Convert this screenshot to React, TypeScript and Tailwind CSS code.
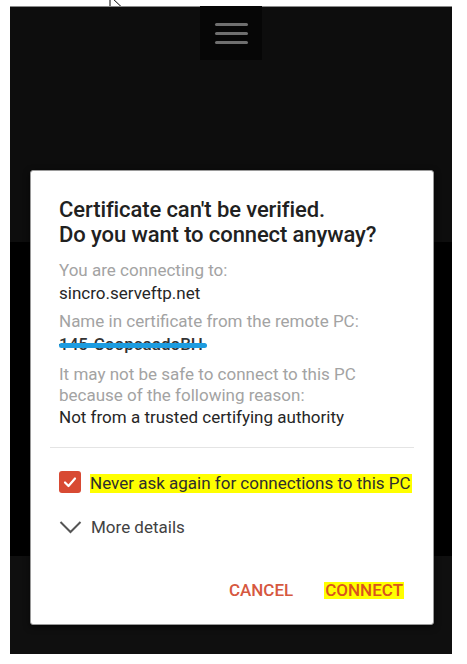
import React from 'react';

const Cursor: React.FC = () => (
  <svg className="absolute left-[109px] top-[-5px]" width="14" height="20" viewBox="0 0 14 20">
    <path d="M1 1 L1 16 L4.5 12.5 L7 18 L9.5 17 L7 11.5 L12 11.5 Z" fill="#fff" stroke="#000" strokeWidth="1" strokeLinejoin="round" />
  </svg>
);

const App: React.FC = () => {
  return (
    <div className="relative w-[467px] h-[664px] bg-white pt-[6px] pl-[10px] font-['Roboto',sans-serif] overflow-hidden">
      <Cursor />
      <div className="relative w-[442px] h-[648px] border-t border-[#8a8a8a] flex flex-col">
        <div className="h-[235px] bg-[#0d0d0d] flex justify-center">
          <button className="w-[62px] h-[54px] bg-[#060606] flex flex-col items-center justify-center gap-[6px] -mt-px">
            <span className="block w-[33px] h-[3px] rounded-full bg-[#6f6f6f]" />
            <span className="block w-[33px] h-[3px] rounded-full bg-[#6f6f6f]" />
            <span className="block w-[33px] h-[3px] rounded-full bg-[#6f6f6f]" />
          </button>
        </div>
        <div className="h-[314px] bg-black" />
        <div className="flex-1 bg-[#0f0f0f]" />

        <div className="absolute left-[20px] top-[163px] w-[404px] h-[455px] bg-white rounded-[3px] border border-[#9a9a9a] shadow-[0_2px_6px_rgba(0,0,0,0.6)] flex flex-col pt-[26px]">
          <div className="px-[28px]">
            <h2 className="text-[22px] leading-[25px] font-medium text-[#212121] tracking-[-0.1px]">
              Certificate can't be verified.
              <br />
              Do you want to connect anyway?
            </h2>
            <p className="mt-[12px] text-[17px] leading-[23px] text-[#a3a3a3]">You are connecting to:</p>
            <p className="text-[17px] leading-[23px] text-[#262626]">sincro.serveftp.net</p>
            <p className="mt-[5px] text-[17px] leading-[23px] text-[#a3a3a3]">Name in certificate from the remote PC:</p>
            <div className="relative inline-block">
              <p className="text-[17px] leading-[23px] text-[#333] font-medium line-through decoration-2">145-CoopcaadoBH</p>
              <span className="absolute left-0 right-[-4px] top-[10px] h-[5px] rounded-full bg-[#1d9ce0]" />
            </div>
            <p className="mt-[7px] text-[17px] leading-[21px] text-[#a3a3a3]">
              It may not be safe to connect to this PC
              <br />
              because of the following reason:
            </p>
            <p className="text-[17px] leading-[23px] text-[#262626]">Not from a trusted certifying authority</p>
          </div>

          <div className="mt-[18px] mx-[19px] h-px bg-[#e4e4e4]" />

          <div className="mt-[23px] pl-[28px] flex items-center gap-[9px] h-[22px]">
            <span className="w-[22px] h-[22px] rounded-[3px] bg-[#d84a33] flex items-center justify-center shrink-0">
              <svg width="16" height="16" viewBox="0 0 16 16">
                <path d="M3 8.5 L6.5 12 L13 4.5" fill="none" stroke="#fff" strokeWidth="2.2" strokeLinecap="round" strokeLinejoin="round" />
              </svg>
            </span>
            <span className="whitespace-nowrap text-[17px] leading-[19px] bg-[#ffff00] text-[#2e2e2e] pr-[1px] mt-[3px]">
              Never ask again for connections to this PC
            </span>
          </div>

          <div className="mt-[23px] px-[28px] flex items-center gap-[9px] h-[22px]">
            <svg width="23" height="14" viewBox="0 0 23 14" className="shrink-0">
              <path d="M1.5 2 L11.5 12 L21.5 2" fill="none" stroke="#555" strokeWidth="2" />
            </svg>
            <span className="text-[17px] leading-[22px] text-[#424242]">More details</span>
          </div>

          <div className="mt-[43px] pr-[29px] flex justify-end items-center gap-[31px]">
            <span className="text-[17px] leading-[18px] font-medium text-[#d6583f]">CANCEL</span>
            <span className="text-[17px] leading-[17px] font-medium text-[#d9531e] bg-[#ffff00] px-[1px]">CONNECT</span>
          </div>
        </div>
      </div>
    </div>
  );
};

export default App;
